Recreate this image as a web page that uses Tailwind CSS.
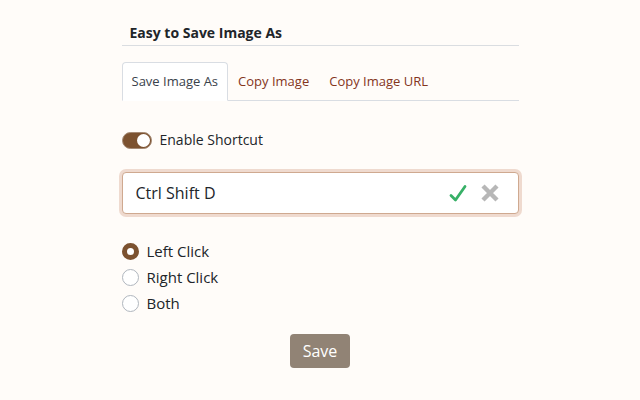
<!DOCTYPE html>
<html lang="en">
<head>
    <meta charset="UTF-8">
    <meta name="viewport" content="width=device-width, initial-scale=1.0">
    <title>Easy to Save Image As</title>
    <script src="https://cdn.jsdelivr.net/npm/@tailwindcss/browser@4"></script>
</head>
<body class="bg-[#fffcf9] font-['Open_Sans',sans-serif] text-[#212529] text-[14px] leading-5">
    <main class="max-w-[397px] mx-auto pt-[23px]">
        <h1 class="font-bold px-2 pb-[2px] border-b border-[#dadde1]">Easy to Save Image As</h1>

        <nav class="flex mt-4 border-b border-[#d9dde3] text-[13px] text-[#84351c]">
            <a href="#save" class="-mb-px px-[9px] py-2 bg-white border border-b-white border-[#d9dde3] rounded-t text-[#39424b]">Save Image As</a>
            <a href="#copy" class="px-[10px] py-[9px]">Copy Image</a>
            <a href="#url" class="px-[10px] py-[9px]">Copy Image URL</a>
        </nav>

        <form id="shortcutForm">
            <div class="flex items-center gap-2 mt-[29px]">
                <input type="checkbox" id="enable" role="switch" checked class="sr-only">
                <label for="enable" class="flex justify-end items-center w-[30px] h-[17px] px-px rounded-full bg-[#7c5230] border border-[#a58a75]">
                    <span class="size-[13px] rounded-full bg-white"></span>
                </label>
                <label for="enable">Enable Shortcut</label>
            </div>

            <div class="flex items-center gap-3 h-[42px] mt-[22px] pl-[13px] pr-[18px] bg-white border border-[#cfa990] rounded ring-3 ring-[#efdacf]">
                <input type="text" id="shortcut" aria-label="Shortcut" value="Ctrl Shift D" class="flex-1 min-w-0 text-base outline-none">
                <button type="button" aria-label="Apply">
                    <svg class="size-5" viewBox="0 0 20 20" fill="none" stroke="#37b067" stroke-width="2.8" stroke-linecap="round" stroke-linejoin="round">
                        <path d="M3 12.5 7.5 17 17 3.5"/>
                    </svg>
                </button>
                <button type="button" aria-label="Clear">
                    <svg class="size-5" viewBox="0 0 20 20" fill="none" stroke="#b7b7b7" stroke-width="4.4">
                        <path d="M3 3 17 17M17 3 3 17"/>
                    </svg>
                </button>
            </div>

            <div class="mt-6 text-[15px]">
                <div class="flex items-center gap-2 h-[26px]">
                    <input type="radio" id="left" name="click" checked class="appearance-none size-[17px] rounded-full bg-white border border-[#b0b6be] checked:border-[5px] checked:border-[#7c5230]">
                    <label for="left">Left Click</label>
                </div>
                <div class="flex items-center gap-2 h-[26px]">
                    <input type="radio" id="right" name="click" class="appearance-none size-[17px] rounded-full bg-white border border-[#b0b6be] checked:border-[5px] checked:border-[#7c5230]">
                    <label for="right">Right Click</label>
                </div>
                <div class="flex items-center gap-2 h-[26px]">
                    <input type="radio" id="both" name="click" class="appearance-none size-[17px] rounded-full bg-white border border-[#b0b6be] checked:border-[5px] checked:border-[#7c5230]">
                    <label for="both">Both</label>
                </div>
            </div>

            <div class="flex justify-center mt-[18px]">
                <button type="submit" class="h-[34px] px-[13px] rounded bg-[#918375] text-white text-base">Save</button>
            </div>
        </form>
    </main>

    <script>
        document.getElementById('shortcutForm').addEventListener('submit', function(event) {
            event.preventDefault();
        });
    </script>
</body>
</html>
